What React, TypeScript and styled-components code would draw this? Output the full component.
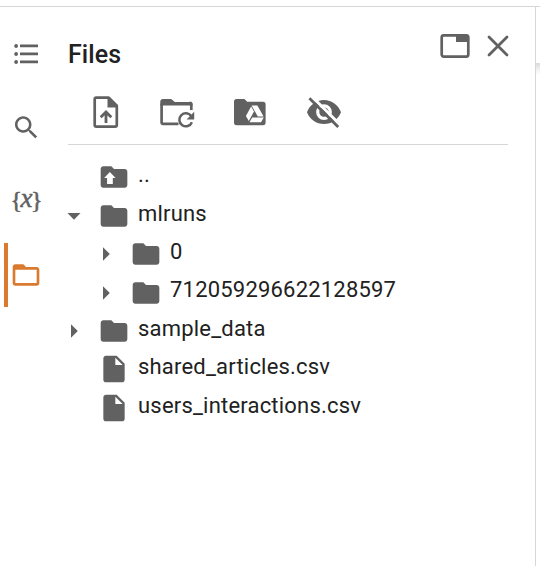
import React from "react";
import styled, { createGlobalStyle } from "styled-components";

const GlobalStyle = createGlobalStyle`
  * { box-sizing: border-box; }
  body { margin: 0; background: #fff; font-family: Roboto, "Liberation Sans", sans-serif; color: #212121; }
`;

const INK = "#616161";
const ACCENT = "#d97a2f";

const Window = styled.div`
  display: flex;
  flex-direction: column;
  width: 540px;
  height: 566px;
  overflow: hidden;
  background: #fff;
`;

const TopStrip = styled.div`
  flex: none;
  height: 7px;
  border-bottom: 1px solid #d6d6d6;
`;

const Body = styled.div`
  flex: 1;
  display: flex;
  min-height: 0;
`;

const Rail = styled.nav`
  width: 68px;
  display: flex;
  flex-direction: column;
  padding-top: 15px;
`;

const RailItem = styled.button<{ $active?: boolean }>`
  display: flex;
  align-items: center;
  width: 52px;
  height: 64px;
  margin: 0 0 9.67px 4px;
  padding: 0 0 0 ${(p) => (p.$active ? 2.4 : 6)}px;
  border: 0;
  border-left: ${(p) => (p.$active ? `4px solid ${ACCENT}` : "0")};
  background: none;
  color: ${(p) => (p.$active ? ACCENT : INK)};
`;

const Variables = styled.span`
  display: flex;
  align-items: center;
  width: 33px;
  justify-content: center;
  font: 24px/28px "Liberation Serif", serif;
  margin-top: -2px;
  b { font-weight: 400; -webkit-text-stroke: 0.6px currentColor; margin: 0 -1.5px; }
  i { font-size: 27px; -webkit-text-stroke: 0.5px currentColor; margin-top: -4px; }
`;

const Panel = styled.main`
  width: 468px;
  display: flex;
  flex-direction: column;
  border-right: 1px solid #d6d6d6;
`;

const Content = styled.div`
  width: 440px;
`;

const Header = styled.header`
  display: flex;
  align-items: flex-start;
  height: 79px;
  padding-top: 25px;
`;

const Title = styled.h1`
  flex: 1;
  margin: 8px 0 0;
  font: 500 25px/30px Roboto, sans-serif;
  letter-spacing: 0.1px;
`;

const PlainButton = styled.button`
  display: block;
  padding: 0;
  border: 0;
  background: none;
  color: ${INK};
`;

const HeaderActions = styled.div`
  display: flex;
  gap: 15px;
  margin-right: -2px;
`;

const Toolbar = styled.div`
  display: flex;
  height: 59px;
  padding: 5px 0 0 17px;
  border-bottom: 1px solid #d6d6d6;
`;

const ToolButton = styled(PlainButton)`
  width: 42px;
  height: 42px;
  margin: 0 31px 0 0;
`;

const Tree = styled.ul`
  list-style: none;
  margin: 0;
  padding: 13px 0 0;
`;

const Row = styled.li<{ $depth: number }>`
  display: flex;
  align-items: center;
  height: 38.45px;
  padding-left: ${(p) => p.$depth * 32}px;
`;

const CaretCell = styled.span`
  width: 31px;
  height: 14px;
  margin-left: -1px;
  color: ${INK};
`;

const FileIconCell = styled.span`
  display: block;
  width: 32px;
  height: 32px;
  color: ${INK};
`;

const Name = styled.span`
  margin: -4.2px 0 0 8px;
  font-size: 22px;
  line-height: 28px;
  letter-spacing: 0.2px;
  white-space: nowrap;
`;

const Gutter = styled.aside`
  flex: 1;
`;

const GutterHeader = styled.div`
  height: 56px;
  background: #fff;
`;

const GutterShadow = styled.div`
  height: 12px;
  background: linear-gradient(#d9d9d9, #f2f2f2 55%, #fff);
`;

const Svg = styled.svg`
  display: block;
  fill: currentColor;
`;

const Icon = ({ children }: { children: React.ReactNode }) => (
  <Svg width={32} height={32} viewBox="0 0 24 24">{children}</Svg>
);

const Tool = ({ label, children }: { label: string; children: React.ReactNode }) => (
  <ToolButton aria-label={label}><Svg width={42} height={42} viewBox="0 0 42 42">{children}</Svg></ToolButton>
);

const FOLDER = "M10 4H4c-1.1 0-1.99.9-1.99 2L2 18c0 1.1.9 2 2 2h16c1.1 0 2-.9 2-2V8c0-1.1-.9-2-2-2h-8l-2-2z";

const icons = {
  up: <><path d={FOLDER} /><path fill="#fff" d="M8.9 8.3l4.3 4.4h-2.1v4.5H6.8v-4.5H4.6z" /></>,
  folder: <path d={FOLDER} />,
  file: <path d="M6 2c-1.1 0-1.99.9-1.99 2L4 20c0 1.1.89 2 1.99 2H18c1.1 0 2-.9 2-2V8l-6-6H6zm7 7V3.5L18.5 9H13z" />,
};

type Entry = { name: string; icon: keyof typeof icons; depth: number; caret?: "open" | "closed" };

const entries: Entry[] = [
  { name: "..", icon: "up", depth: 0 },
  { name: "mlruns", icon: "folder", depth: 0, caret: "open" },
  { name: "0", icon: "folder", depth: 1, caret: "closed" },
  { name: "712059296622128597", icon: "folder", depth: 1, caret: "closed" },
  { name: "sample_data", icon: "folder", depth: 0, caret: "closed" },
  { name: "shared_articles.csv", icon: "file", depth: 0 },
  { name: "users_interactions.csv", icon: "file", depth: 0 },
];

export default function App() {
  return (
    <Window>
      <GlobalStyle />
      <TopStrip />
      <Body>
        <Rail>
          <RailItem aria-label="Table of contents">
            <Svg width={32} height={32} viewBox="0 0 32 32">
              <path d="M10 6.6h18v2.7H10zM10 14.6h18v2.7H10zM10 22.6h18v2.7H10z" />
              <circle cx="6.1" cy="8" r="1.9" /><circle cx="6.1" cy="16" r="1.9" /><circle cx="6.1" cy="24" r="1.9" />
            </Svg>
          </RailItem>
          <RailItem aria-label="Search">
            <Icon>
              <path transform="translate(.9 .3) scale(.95)" d="M15.5 14h-.79l-.28-.27C15.41 12.59 16 11.11 16 9.5 16 5.91 13.09 3 9.5 3S3 5.91 3 9.5 5.91 16 9.5 16c1.61 0 3.09-.59 4.23-1.57l.27.28v.79l5 4.99L20.49 19l-4.99-5zm-6 0C7.01 14 5 11.99 5 9.5S7.01 5 9.5 5 14 7.01 14 9.5 11.99 14 9.5 14z" />
            </Icon>
          </RailItem>
          <RailItem aria-label="Variables"><Variables><b>{"{"}</b><i>x</i><b>{"}"}</b></Variables></RailItem>
          <RailItem $active aria-label="Files">
            <Icon>
              <path d="M20 6h-8l-2-2H4c-1.1 0-1.99.9-1.99 2L2 18c0 1.1.9 2 2 2h16c1.1 0 2-.9 2-2V8c0-1.1-.9-2-2-2zm0 12H4V8h16v10z" />
            </Icon>
          </RailItem>
        </Rail>
        <Panel>
          <Content>
            <Header>
              <Title>Files</Title>
              <HeaderActions>
                <PlainButton aria-label="Open in tab">
                  <Svg width={32} height={28} viewBox="0 0 32 28">
                    <rect x="2.7" y="3.4" width="26.6" height="21.2" rx="2" fill="none" stroke="currentColor" strokeWidth="2.7" />
                    <path d="M17 3h12v7H17z" />
                  </Svg>
                </PlainButton>
                <PlainButton aria-label="Close">
                  <Svg width={24} height={28} viewBox="0 0 24 28">
                    <path d="M3 5l18 18M21 5L3 23" stroke="currentColor" strokeWidth="2.8" strokeLinecap="round" />
                  </Svg>
                </PlainButton>
              </HeaderActions>
            </Header>
            <Toolbar>
              <Tool label="Upload">
                <path fill="none" stroke="currentColor" strokeWidth="2.7" strokeLinejoin="round" d="M11.3 6.6h12.4l8.1 8.1v19.4q0 1.6-1.6 1.6H11.3q-1.6 0-1.6-1.6v-25.9q0-1.6 1.6-1.6z" />
                <path d="M22.5 6h2l8 8v2.5h-10z" />
                <path fill="none" stroke="currentColor" strokeWidth="2.8" d="M21 32V21.2M15.7 26.3L21 21l5.3 5.3" />
              </Tool>
              <Tool label="Refresh">
                <path fill="none" stroke="currentColor" strokeWidth="2.7" d="M20.5 32.8H5.2q-1.6 0-1.6-1.6V12.5M33.3 19v-5.5q0-1.6-1.6-1.6" />
                <path d="M2.3 14.5V10.7Q2.3 8 5 8h8.2l3.6 3h15q2.8 0 2.8 2.7v.8z" />
                <path fill="none" stroke="currentColor" strokeWidth="2.5" d="M33.4 25.4a6.5 6.5 0 1 0 .5 5.8" />
                <path d="M36.2 20.8v7.6h-7.6z" />
              </Tool>
              <Tool label="Mount Drive">
                <path d="M5.6 8h7.8l2.8 2.8h15.8q2.6 0 2.6 2.6v18.2q0 2.6-2.6 2.6H5.6q-2.6 0-2.6-2.6v-21Q3 8 5.6 8z" />
                <path fill="#fff" d="M20.6 14.6h5.8l6.2 11h-5.800zM20.100 15.500l2.900 5-5.200 9.400-2.900-4.800zM21.200 26.600h11.600l-2.800 4.700H18.500z" />
              </Tool>
              <Tool label="Hide hidden files">
                <path transform="translate(-1 0)" fillRule="evenodd" d="M4 21.2C6.6 14.2 13.3 9 21 9s14.4 5.2 17 12.2C35.4 28.3 28.7 33 21 33S6.6 28.3 4 21.2zM21 13.2a7.9 7.9 0 1 0 0 15.8 7.9 7.9 0 1 0 0-15.8zM21 16.4a4.7 4.7 0 1 1 0 9.4 4.7 4.7 0 1 1 0-9.4z" />
                <path d="M7.6 5.3L36.4 34.1" stroke="#fff" strokeWidth="3" />
                <path d="M5.4 7.3L34.2 36.1" stroke="currentColor" strokeWidth="2.8" />
              </Tool>
            </Toolbar>
            <Tree>
              {entries.map((e) => (
                <Row key={e.name} $depth={e.depth}>
                  <CaretCell>
                    {e.caret && (
                      <Svg width={14} height={14} viewBox="0 0 14 14">
                        <path d={e.caret === "open" ? "M.5 4h13L7 10.7z" : "M4 .3v13.4L10.8 7z"} />
                      </Svg>
                    )}
                  </CaretCell>
                  <FileIconCell><Icon>{icons[e.icon]}</Icon></FileIconCell>
                  <Name>{e.name}</Name>
                </Row>
              ))}
            </Tree>
          </Content>
        </Panel>
        <Gutter><GutterHeader /><GutterShadow /></Gutter>
      </Body>
    </Window>
  );
}
